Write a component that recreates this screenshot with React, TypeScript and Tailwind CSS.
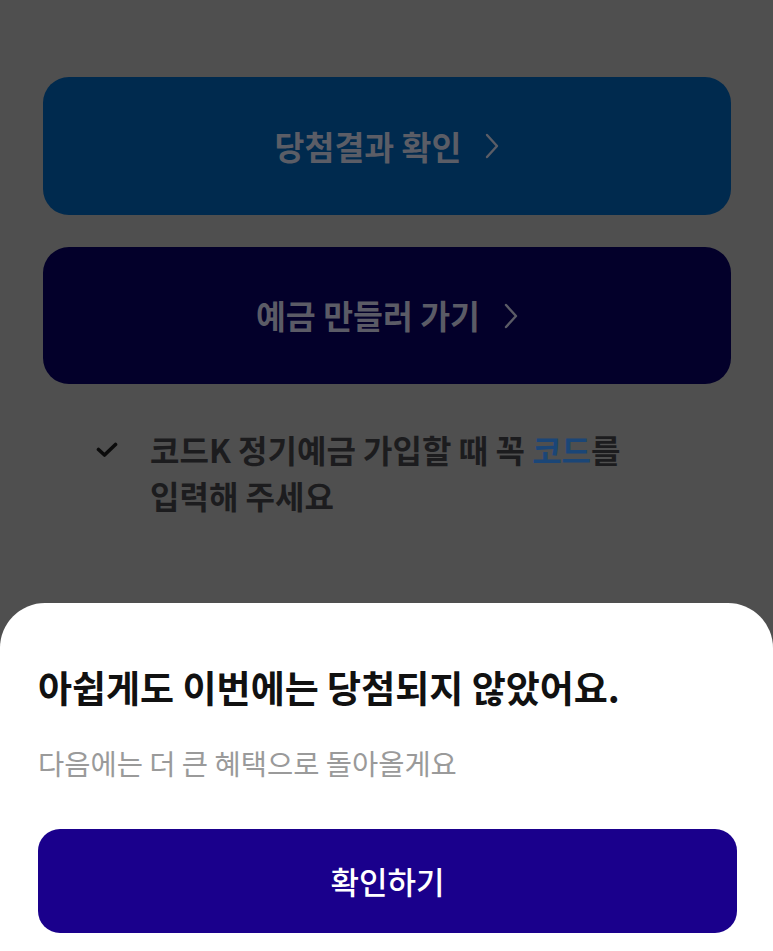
import React from 'react'

const font = { fontFamily: '"Noto Sans CJK KR", "Noto Sans", sans-serif' }

function Chevron() {
  return (
    <svg width="14" height="26" viewBox="0 0 14 26" fill="none" className="ml-[24px]">
      <path d="M2 2 L12 13 L2 24" stroke="currentColor" strokeWidth="2.4" strokeLinecap="round" strokeLinejoin="round" />
    </svg>
  )
}

function Check() {
  return (
    <svg width="22" height="16" viewBox="0 0 22 16" fill="none" className="mt-[16px] shrink-0">
      <path d="M2.5 7.5 L8.5 13 L19.5 2.5" stroke="#0b0b0b" strokeWidth="3.6" strokeLinecap="round" strokeLinejoin="round" />
    </svg>
  )
}

export default function App() {
  return (
    <div className="min-h-screen bg-[#4f4f4f]" style={font}>
      {/* dimmed page */}
      <div className="px-[43px] pt-[77px] pr-[42px]">
        <div className="flex flex-col gap-[32px]">
          <button className="h-[138px] w-full rounded-[26px] bg-[#002a4e] flex items-center justify-center text-[#5b5d66]">
            <span className="text-[32.5px] font-bold">당첨결과 확인</span>
            <Chevron />
          </button>
          <button className="h-[137px] w-full rounded-[26px] bg-[#03002a] flex items-center justify-center text-[#5b5b66]">
            <span className="text-[32.5px] font-bold">예금 만들러 가기</span>
            <Chevron />
          </button>
        </div>

        <div className="mt-[42px] pl-[53px] flex gap-[32px]">
          <Check />
          <p className="text-[32px] font-bold leading-[46px] text-[#1c1c1e]">
            코드K 정기예금 가입할 때 꼭 <span className="text-[#1b4677]">코드</span>를
            <br />
            입력해 주세요
          </p>
        </div>
      </div>

      {/* bottom sheet */}
      <div className="fixed bottom-0 inset-x-0 bg-white rounded-t-[45px] pt-[62px] pb-[18px] pl-[38px] pr-[36px]">
        <h2 className="text-[37px] font-bold leading-[44px] text-[#111111]">
          아쉽게도 이번에는 당첨되지 않았어요.
        </h2>
        <p className="mt-[36px] text-[28.5px] leading-[36px] text-[#9a9a9a]">
          다음에는 더 큰 혜택으로 돌아올게요
        </p>
        <button className="mt-[48px] h-[104px] w-full rounded-[22px] bg-[#1a008c] text-white text-[31px] font-medium">
          확인하기
        </button>
      </div>
    </div>
  )
}
